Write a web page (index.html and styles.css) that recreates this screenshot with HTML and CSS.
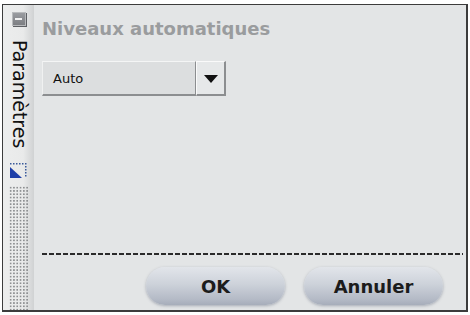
FILE: index.html
```html
<!DOCTYPE html>
<html lang="fr">
<head>
<meta charset="utf-8">
<link rel="stylesheet" href="styles.css">
</head>
<body>
<div class="frame">
  <aside class="sidebar">
    <div class="collapse"><span class="minus"></span></div>
    <div class="vtitle">Paramètres</div>
    <div class="corner">
      <svg width="20" height="18" viewBox="0 0 20 18">
        <g fill="#3a5a9a">
          <rect x="1" y="1" width="1.5" height="1.5"/>
          <rect x="4" y="1" width="1.5" height="1.5"/>
          <rect x="7" y="1" width="1.5" height="1.5"/>
          <rect x="10" y="1" width="1.5" height="1.5"/>
          <rect x="13" y="1" width="1.5" height="1.5"/>
          <rect x="16" y="1" width="1.5" height="1.5"/>
          <rect x="16" y="4" width="1.5" height="1.5"/>
          <rect x="16" y="7" width="1.5" height="1.5"/>
          <rect x="16" y="10" width="1.5" height="1.5"/>
          <rect x="16" y="13" width="1.5" height="1.5"/>
        </g>
        <polygon points="1,5 1,16 13,16" fill="#1e3fa8"/>
      </svg>
    </div>
    <div class="grip"></div>
  </aside>
  <main class="content">
    <h1 class="title">Niveaux automatiques</h1>
    <div class="select">
      <div class="select-value">Auto</div>
      <div class="select-btn"><span class="arrow"></span></div>
    </div>
    <div class="spacer"></div>
    <div class="dashed"></div>
    <div class="actions">
      <button class="pill">OK</button>
      <button class="pill">Annuler</button>
    </div>
  </main>
</div>
</body>
</html>
```
FILE: styles.css
```css
html, body {
  margin: 0;
  padding: 0;
  background: #ffffff;
}
body {
  width: 470px;
  height: 315px;
  overflow: hidden;
  font-family: "DejaVu Sans", "Liberation Sans", sans-serif;
}
.frame {
  box-sizing: border-box;
  margin: 4px 0 0 2px;
  width: 466px;
  height: 308px;
  border: 1px solid #3c3c3c;
  border-right-width: 2px;
  border-bottom-width: 2px;
  display: flex;
  background: #e3e5e6;
}
.sidebar {
  width: 31px;
  flex: none;
  display: flex;
  flex-direction: column;
  align-items: center;
  background: linear-gradient(to right, #eceded 0%, #e9eaea 65%, #d0d2d3 100%);
}
.collapse {
  margin-top: 7px;
  width: 14px;
  height: 14px;
  box-sizing: border-box;
  background: linear-gradient(#9a9ca0, #7c7e82);
  border: 1px solid #b8babc;
  box-shadow: 1px 1px 0 #5e6064;
  display: flex;
  align-items: center;
  justify-content: center;
}
.minus {
  width: 7px;
  height: 2px;
  background: #f2f2f2;
}
.vtitle {
  writing-mode: vertical-rl;
  margin-top: 14px;
  font-family: "DejaVu Sans", sans-serif;
  font-size: 19px;
  color: #111;
  line-height: 20px;
  margin-left: 2px;
}
.corner {
  margin-top: 14px;
  height: 18px;
  display: flex;
}
.grip {
  margin-top: 6px;
  flex: 1;
  width: 19px;
  background-image: radial-gradient(circle, #8e9092 0.75px, transparent 1.05px);
  background-size: 3.3px 3.3px;
  background-position: 0 0;
}
.content {
  flex: 1;
  display: flex;
  flex-direction: column;
  padding: 0 2px 0 8px;
}
.title {
  margin: 14px 0 0 0;
  font-size: 18px;
  font-weight: bold;
  color: #9a9c9e;
  line-height: 20px;
}
.select {
  margin-top: 22px;
  display: flex;
  height: 35px;
  width: 184px;
}
.select-value {
  box-sizing: border-box;
  width: 154px;
  background: #dcdedf;
  border-top: 1px solid #f4f5f5;
  border-left: 1px solid #f0f1f1;
  border-bottom: 2px solid #8c8e90;
  border-right: 1px solid #8c8e90;
  font-size: 13px;
  color: #111;
  padding: 9px 0 0 10px;
}
.select-btn {
  box-sizing: border-box;
  width: 30px;
  background: #e6e8e9;
  border-left: 1px solid #fafafa;
  border-top: 1px solid #fafafa;
  border-right: 2px solid #8c8e90;
  border-bottom: 2px solid #8c8e90;
  display: flex;
  align-items: center;
  justify-content: center;
}
.arrow {
  width: 0;
  height: 0;
  border-left: 7px solid transparent;
  border-right: 7px solid transparent;
  border-top: 8px solid #111;
  margin-top: 1px;
}
.spacer {
  flex: 1;
}
.dashed {
  height: 2px;
  margin-right: 1px;
  background: repeating-linear-gradient(to right, #2a2a2a 0 5px, transparent 5px 7px);
}
.actions {
  display: flex;
  justify-content: flex-end;
  gap: 19px;
  padding: 12px 21px 5px 0;
}
.pill {
  width: 139px;
  height: 38px;
  border: none;
  border-radius: 19px;
  background: linear-gradient(#e2e5ea 0%, #cdd2da 45%, #b4bac6 85%, #a6adba 100%);
  box-shadow: 0 1px 3px rgba(90, 100, 120, 0.45);
  font-family: "DejaVu Sans", sans-serif;
  font-weight: bold;
  font-size: 18px;
  color: #1c1c1c;
  padding: 0;
}
```
